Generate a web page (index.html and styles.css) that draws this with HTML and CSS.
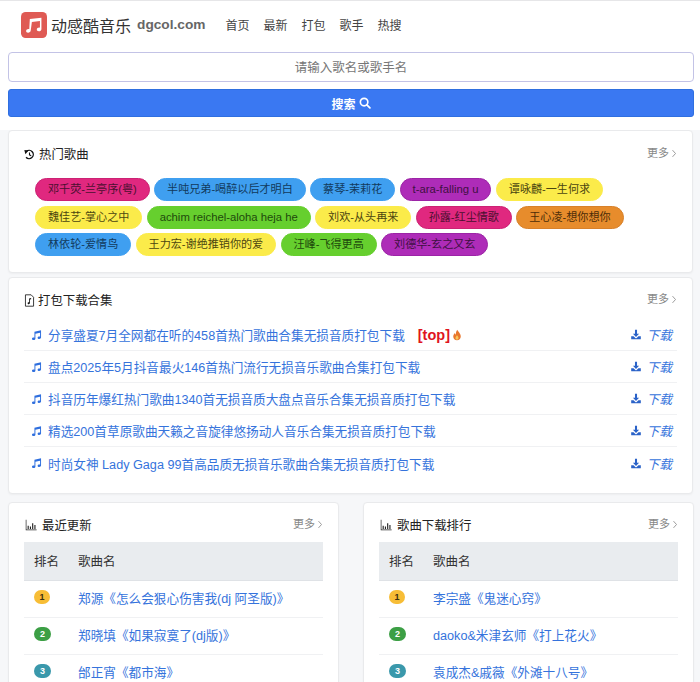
FILE: index.html
```html
<!DOCTYPE html>
<html lang="zh">
<head>
<meta charset="utf-8">
<title>动感酷音乐</title>
<link rel="stylesheet" href="styles.css">
</head>
<body>
<svg class="defs" width="0" height="0" aria-hidden="true">
  <symbol id="note" viewBox="0 0 16 16"><path fill="currentColor" d="M5 3.2 14.6 1v10.6c0 1.2-1.2 2.1-2.6 2.1s-2.4-.7-2.4-1.8 1.100-1.900 2.500-1.900c.4 0 .8.100 1.100.200V4.700L6.400 6.300v7c0 1.200-1.200 2.100-2.600 2.100S1.400 14.700 1.400 13.600s1.100-1.900 2.500-1.900c.4 0 .8.100 1.100.200z"/></symbol>
  <symbol id="dl" viewBox="0 0 16 16"><path fill="currentColor" d="M6.500 1h3v6h3L8 11.500 3.500 7h3z"/><path fill="currentColor" d="M1 10.500h3.500L7 13c.6.500 1.400.500 2 0l2.500-2.500H15V14.500c0 .3-.2.500-.5.500h-13c-.3 0-.5-.2-.5-.500z"/></symbol>
  <symbol id="bars" viewBox="0 0 16 16"><path fill="currentColor" d="M1 1h.9v13.100H15.500V15H1z"/><path fill="currentColor" d="M3.500 9h1.500v4.200H3.500zM6.500 10h1.500v3.200H6.500zM9.500 5.500h1.500v7.700H9.500zM12.500 8h1.500v5.200h-1.500z"/></symbol>
  <symbol id="chev" viewBox="0 0 8 12"><path fill="none" stroke="currentColor" stroke-width="1.100" d="m2 1.500 4 4.500-4 4.500"/></symbol>
</svg>

<header class="topbar">
  <a class="brand">
    <svg class="logo" viewBox="0 0 28 28"><rect width="28" height="28" rx="5" fill="#df5a54"/><path fill="#fff" d="M9.500 7.500 22 6.300v11.900c0 1.500-1.300 2.500-2.800 2.500-1.400 0-2.200-.8-2.200-1.800 0-1.200 1.200-2.100 2.600-2.100.3 0 .6 0 .8.100V9.800l-8.700.9-1.200 9.300c-.2 1.400-1.400 2.300-2.900 2.300-1.300 0-2.100-.7-2.100-1.800 0-1.200 1.200-2.100 2.600-2.100.3 0 .6.100.8.100z"/></svg>
    <span class="brand-name">动感酷音乐</span>
    <span class="brand-domain">dgcol.com</span>
  </a>
  <nav class="nav"><a>首页</a><a>最新</a><a>打包</a><a>歌手</a><a>热搜</a></nav>
</header>

<form class="search">
  <input class="search-input" type="text" placeholder="请输入歌名或歌手名">
  <button class="search-btn" type="button">搜索
    <svg class="search-ic" viewBox="0 0 16 16"><circle cx="6.800" cy="6.800" r="5" fill="none" stroke="currentColor" stroke-width="2.200"/><path d="m10.500 10.500 4 4" stroke="currentColor" stroke-width="2.400" stroke-linecap="round"/></svg>
  </button>
</form>

<section class="card card-hot">
  <div class="card-head">
    <h2 class="card-title">
      <svg class="t-ic" viewBox="0 0 16 16"><path fill="none" stroke="#111" stroke-width="2" d="M3.500 3.500A6 6 0 1 1 3 12"/><path fill="#111" d="M.5 1.500 6.500 2 2 7.500z"/><path fill="none" stroke="#111" stroke-width="1.600" d="M8 5v3.500l2.500 1.500"/></svg>
      热门歌曲</h2>
    <a class="more">更多<svg class="chev"><use href="#chev"/></svg></a>
  </div>
  <div class="tags">
    <a class="tag pink">邓千荧-兰亭序(粤)</a>
    <a class="tag blue">半吨兄弟-喝醉以后才明白</a>
    <a class="tag blue">蔡琴-茉莉花</a>
    <a class="tag purple latin">t-ara-falling u</a>
    <a class="tag yellow">谭咏麟-一生何求</a>
    <a class="tag yellow">魏佳艺-掌心之中</a>
    <a class="tag green latin">achim reichel-aloha heja he</a>
    <a class="tag yellow">刘欢-从头再来</a>
    <a class="tag pink">孙露-红尘情歌</a>
    <a class="tag orange">王心凌-想你想你</a>
    <a class="tag blue">林依轮-爱情鸟</a>
    <a class="tag yellow">王力宏-谢绝推销你的爱</a>
    <a class="tag green">汪峰-飞得更高</a>
    <a class="tag purple">刘德华-玄之又玄</a>
  </div>
</section>

<section class="card card-pack">
  <div class="card-head">
    <h2 class="card-title">
      <svg class="t-ic tall" viewBox="0 0 12 16"><path fill="none" stroke="#111" stroke-width="1" d="M1 1h7l3 3v11H1z"/><path fill="#111" d="M5.500 5.500 8 5v1.400l-1.500.3v4.500c0 .8-.7 1.300-1.500 1.300S3.700 11.900 3.700 11.300s.6-1.100 1.400-1.100c.1 0 .3 0 .4 0z"/></svg>
      打包下载合集</h2>
    <a class="more">更多<svg class="chev"><use href="#chev"/></svg></a>
  </div>
  <ul class="packs">
    <li class="pack"><svg class="note"><use href="#note"/></svg><a class="pack-link">分享盛夏7月全网都在听的458首热门歌曲合集无损音质打包下载</a><b class="top">[top]</b><svg class="flame" viewBox="0 0 16 16"><path fill="#e8762c" d="M8.500 1c.5 2.500 4.500 4.500 4.500 9 0 3-2.200 5-5 5s-5-2-5-5c0-2.200 1.200-3.700 2.200-4.800.2 1.200.6 1.900 1.300 2.300C6.300 5 7 2.500 8.500 1z"/><path fill="#f8c55a" d="M8 8c.4 1.200 2 2 2 4 0 1.300-.9 2.200-2 2.200s-2-.9-2-2.200c0-1.800 1.600-2.500 2-4z"/></svg><a class="dl"><svg class="dl-ic"><use href="#dl"/></svg><i>下载</i></a></li>
    <li class="pack"><svg class="note"><use href="#note"/></svg><a class="pack-link">盘点2025年5月抖音最火146首热门流行无损音乐歌曲合集打包下载</a><a class="dl"><svg class="dl-ic"><use href="#dl"/></svg><i>下载</i></a></li>
    <li class="pack"><svg class="note"><use href="#note"/></svg><a class="pack-link">抖音历年爆红热门歌曲1340首无损音质大盘点音乐合集无损音质打包下载</a><a class="dl"><svg class="dl-ic"><use href="#dl"/></svg><i>下载</i></a></li>
    <li class="pack"><svg class="note"><use href="#note"/></svg><a class="pack-link">精选200首草原歌曲天籁之音旋律悠扬动人音乐合集无损音质打包下载</a><a class="dl"><svg class="dl-ic"><use href="#dl"/></svg><i>下载</i></a></li>
    <li class="pack"><svg class="note"><use href="#note"/></svg><a class="pack-link">时尚女神 Lady Gaga 99首高品质无损音乐歌曲合集无损音质打包下载</a><a class="dl"><svg class="dl-ic"><use href="#dl"/></svg><i>下载</i></a></li>
  </ul>
</section>

<div class="columns">
  <section class="card rank-card">
    <div class="card-head">
      <h2 class="card-title"><svg class="t-ic wide"><use href="#bars"/></svg>最近更新</h2>
      <a class="more">更多<svg class="chev"><use href="#chev"/></svg></a>
    </div>
    <table class="rank">
      <thead><tr><th class="c-rank">排名</th><th>歌曲名</th></tr></thead>
      <tbody>
        <tr><td class="c-rank"><span class="badge gold">1</span></td><td><a>郑源《怎么会狠心伤害我(dj 阿圣版)》</a></td></tr>
        <tr><td class="c-rank"><span class="badge grn">2</span></td><td><a>郑晓填《如果寂寞了(dj版)》</a></td></tr>
        <tr><td class="c-rank"><span class="badge teal">3</span></td><td><a>邰正宵《都市海》</a></td></tr>
      </tbody>
    </table>
  </section>
  <section class="card rank-card">
    <div class="card-head">
      <h2 class="card-title"><svg class="t-ic wide"><use href="#bars"/></svg>歌曲下载排行</h2>
      <a class="more">更多<svg class="chev"><use href="#chev"/></svg></a>
    </div>
    <table class="rank">
      <thead><tr><th class="c-rank">排名</th><th>歌曲名</th></tr></thead>
      <tbody>
        <tr><td class="c-rank"><span class="badge gold">1</span></td><td><a>李宗盛《鬼迷心窍》</a></td></tr>
        <tr><td class="c-rank"><span class="badge grn">2</span></td><td><a>daoko&amp;米津玄师《打上花火》</a></td></tr>
        <tr><td class="c-rank"><span class="badge teal">3</span></td><td><a>袁成杰&amp;戚薇《外滩十八号》</a></td></tr>
      </tbody>
    </table>
  </section>
</div>
</body>
</html>
```

FILE: styles.css
```css
* { box-sizing: border-box; }
html, body { height: 682px; overflow: hidden; }
body {
  margin: 0;
  background: #f6f7f9;
  color: #212529;
  font-family: "Liberation Sans", "Noto Sans CJK SC", sans-serif;
  font-size: 12px;
}
.defs { position: absolute; }
a { color: inherit; text-decoration: none; }

.topbar {
  height: 48px;
  background: #fff;
  border-top: 1px solid #e6e6e8;
  display: flex;
  align-items: center;
  padding: 0 0 0 21px;
}
.brand { display: flex; align-items: center; }
.logo { width: 26px; height: 26px; margin-right: 4px; }
.brand-name { font-size: 16px; color: #333; }
.brand-domain { font-size: 13.700px; font-weight: 700; color: #666; margin-left: 6px; }
.nav { display: flex; gap: 14px; margin-left: 20px; font-size: 12px; color: #444; }

.search { background: #fff; padding: 4px 6px 13px 8px; display: flex; flex-direction: column; gap: 7px; }
.search-input {
  height: 30px;
  border: 1px solid #c3c3e6;
  border-radius: 4px;
  background: #fff;
  text-align: center;
  padding: 2px 0 0;
  font: 12.500px "Liberation Sans", "Noto Sans CJK SC", sans-serif;
  outline: none;
}
.search-input::placeholder { color: #777; }
.search-btn {
  height: 28px;
  border: 1px solid #2f6fe0;
  border-radius: 3px;
  background: #3a78f2;
  color: #fff;
  font: 700 12px "Liberation Sans", "Noto Sans CJK SC", sans-serif;
  display: flex;
  align-items: center;
  justify-content: center;
  gap: 3px;
}
.search-ic { width: 12px; height: 12px; }

.card {
  background: #fff;
  border: 1px solid #e9eaec;
  border-radius: 4px;
  padding: 14px 15px 0;
  margin: 0 7px 4px 8px;
  box-shadow: 0 1px 2px rgba(0,0,0,.04);
}
.card-hot { height: 143px; }
.card-pack { height: 217px; padding-top: 13px; margin-bottom: 8px; }
.card-head { display: flex; justify-content: space-between; align-items: flex-start; height: 18px; }
.card-title { margin: 0; display: flex; align-items: center; font-size: 12.400px; font-weight: 400; color: #222; height: 18px; }
.t-ic { width: 11px; height: 11px; margin-right: 4px; }
.t-ic.tall { height: 13px; margin-right: 3px; }
.t-ic.wide { width: 14px; height: 12px; margin-right: 4px; color: #222; }
.more { color: #888; font-size: 11px; display: flex; align-items: center; line-height: 14px; margin-top: 1px; }
.chev { width: 6px; height: 9px; margin-left: 2px; color: #888; }

.tags { display: flex; flex-wrap: wrap; gap: 4.500px 4.300px; margin-top: 15px; padding-left: 11px; }
.tag {
  height: 23px;
  line-height: 21px;
  padding: 0 12px;
  border-radius: 12px;
  border: 1px solid transparent;
  font-size: 11.100px;
  color: #3a3a2a;
}
.tag.latin { font-size: 11.300px; }
.pink { background: #e0287f; border-color: #cc2274; color: #4a1030; }
.blue { background: #3f9ff0; border-color: #3f9ff0; color: #123a5c; }
.purple { background: #ae2cb8; border-color: #9c24a6; color: #3e1042; }
.yellow { background: #fbeb4a; border-color: #fbeb4a; color: #4c4610; }
.green { background: #66cf2e; border-color: #66cf2e; color: #1e4a0c; }
.orange { background: #e78c2c; border-color: #d8812a; color: #4c2c08; }

.packs { list-style: none; margin: 10px 0 0; padding: 0; }
.pack {
  height: 32px;
  display: flex;
  align-items: center;
  border-bottom: 1px solid #f0f1f3;
  padding: 0 0 0 7px;
}
.pack:last-child { border-bottom: 0; }
.note { width: 11px; height: 12px; color: #2f6fde; margin-right: 6px; flex: none; }
.pack-link { color: #3573dc; font-size: 12.650px; }
.top { color: #e0141e; margin-left: 13px; font-size: 14.500px; }
.flame { width: 12px; height: 12px; margin-left: 1px; }
.dl { margin-left: auto; margin-right: 5px; display: flex; align-items: center; gap: 4px; color: #3573dc; }
.dl i { font-style: italic; font-size: 12.800px; }
.dl-ic { width: 12px; height: 11px; color: #2a62c8; }

.columns { display: grid; grid-template-columns: 331px 331px; justify-content: space-between; margin: 0 7px 0 8px; gap: 24px; }
.rank-card { margin: 0; padding: 13px 15px 0; height: 220px; border-radius: 4px; }
.rank { width: 100%; border-collapse: collapse; margin-top: 8px; font-size: 12.650px; }
.rank th { background: #e9ecef; height: 38px; text-align: left; font-weight: 400; color: #333; font-size: 12.500px; padding: 0; border-bottom: 1px solid #dfe2e6; }
.rank td { height: 37px; border-bottom: 1px solid #f0f1f3; padding: 0 0 2px; color: #3573dc; }
.c-rank { width: 54px; padding-left: 10px !important; }
.badge { display: inline-flex; width: 16px; height: 14px; border-radius: 7px; align-items: center; justify-content: center; font-size: 9px; font-weight: 700; margin-bottom: 3px; }
.gold { background: #f7bd36; color: #3a3010; }
.grn { background: #3c9f45; color: #fff; width: 17px; }
.teal { background: #3a98ab; color: #fff; width: 17px; }
```
